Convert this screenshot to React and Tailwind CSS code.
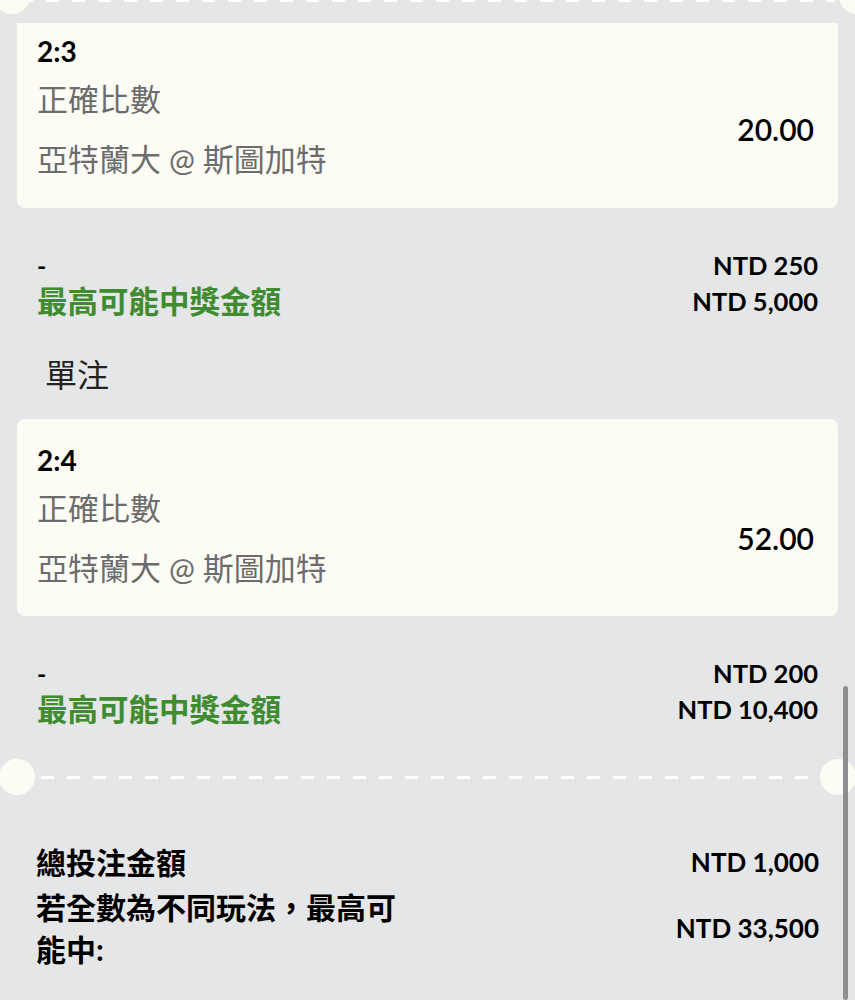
const bets = [
  {
    score: '2:3',
    market: '正確比數',
    match: '亞特蘭大 @ 斯圖加特',
    odds: '20.00',
    stake: 'NTD 250',
    win: 'NTD 5,000',
  },
  {
    score: '2:4',
    market: '正確比數',
    match: '亞特蘭大 @ 斯圖加特',
    odds: '52.00',
    stake: 'NTD 200',
    win: 'NTD 10,400',
  },
];

function Dashes({ className }) {
  return (
    <div
      className={`absolute h-[3px] bg-[repeating-linear-gradient(90deg,#ffffff_0_13px,transparent_13px_26px)] ${className}`}
    />
  );
}

function BetCard({ bet, clipped }) {
  return (
    <div
      className={`bg-[#fdfcf4] pl-5 pr-6 ${
        clipped ? 'rounded-b-lg pt-[10px] pb-[19px]' : 'rounded-lg pt-[23px] pb-[18px]'
      }`}
    >
      <div className="text-[28px] leading-[36px] font-bold text-black">{bet.score}</div>
      <div className="flex items-center justify-between">
        <div className="text-[31px] leading-[60px] text-[#6c6c6c]">
          <div>{bet.market}</div>
          <div>{bet.match}</div>
        </div>
        <div className="text-[30px] font-semibold text-black">{bet.odds}</div>
      </div>
    </div>
  );
}

function BetSummary({ bet }) {
  return (
    <div className="mt-[39px] flex justify-between px-5 font-bold leading-[36px]">
      <div>
        <div className="text-[25px] text-black">-</div>
        <div className="text-[30.5px] text-[#3f8b2f]">最高可能中獎金額</div>
      </div>
      <div className="text-right text-[25.5px] text-black">
        <div>{bet.stake}</div>
        <div>{bet.win}</div>
      </div>
    </div>
  );
}

export default function App() {
  return (
    <div className="relative w-[855px] h-[1000px] overflow-hidden bg-[#e5e6e8] font-['Lato','Noto_Sans_CJK_TC',sans-serif]">
      {/* ticket edge at the top */}
      <div className="relative h-[23px]">
        <Dashes className="top-[-1px] left-[20px] right-[20px]" />
        <div className="absolute left-[-6px] top-[-22px] w-9 h-9 rounded-full bg-[#fdfcf4]" />
        <div className="absolute right-[-20px] top-[-22px] w-9 h-9 rounded-full bg-[#fdfcf4]" />
      </div>

      <div className="px-[17px]">
        <BetCard bet={bets[0]} clipped />
        <BetSummary bet={bets[0]} />

        <div className="mt-9 ml-7 text-[32px] leading-[40px] text-[#222]">單注</div>

        <div className="mt-6">
          <BetCard bet={bets[1]} />
        </div>
        <BetSummary bet={bets[1]} />
      </div>

      {/* dashed divider */}
      <div className="relative mt-8 h-9">
        <Dashes className="top-[17px] left-[41px] right-[37px]" />
        <div className="absolute left-[-1px] top-0 w-9 h-9 rounded-full bg-[#fdfcf4]" />
        <div className="absolute right-[-1px] top-0 w-9 h-9 rounded-full bg-[#fdfcf4]" />
      </div>

      <div className="mt-[46px] pl-9 pr-9 font-bold text-black">
        <div className="flex items-center justify-between leading-[42px]">
          <div className="text-[30px]">總投注金額</div>
          <div className="text-[26px]">NTD 1,000</div>
        </div>
        <div className="mt-[3px] flex items-center justify-between leading-[42px]">
          <div className="w-[375px] text-[30px]">若全數為不同玩法，最高可能中:</div>
          <div className="text-[26px]">NTD 33,500</div>
        </div>
      </div>

      {/* scrollbar */}
      <div className="absolute right-[7px] top-[686px] bottom-0 w-[5px] rounded-full bg-[#8e8e90]" />
    </div>
  );
}
